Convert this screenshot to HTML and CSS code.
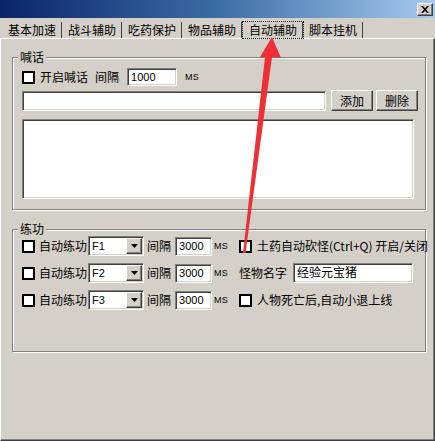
FILE: index.html
```html
<!DOCTYPE html>
<html>
<head>
<meta charset="utf-8">
<link rel="stylesheet" href="styles.css">
</head>
<body>
<div class="window">
  <div class="titlebar">
    <span class="close raised"><svg width="8" height="7" viewBox="0 0 8 7"><path d="M0 0h2l2 2.2L6 0h2L5 3.5 8 7H6L4 4.8 2 7H0l3-3.5z" fill="#000"/></svg></span>
  </div>
  <div class="tabs">
    <div class="tab">基本加速</div>
    <div class="tab">战斗辅助</div>
    <div class="tab">吃药保护</div>
    <div class="tab">物品辅助</div>
    <div class="tab active">自动辅助</div>
    <div class="tab">脚本挂机</div>
  </div>
  <div class="panel">
    <div class="group g1">
      <div class="group-title">喊话</div>
      <div class="row r1">
        <span class="cb"></span>
        <span class="lbl ml5">开启喊话</span>
        <span class="lbl ml7">间隔</span>
        <span class="field sunken w50 ml8">1000</span>
        <span class="ms ml8">MS</span>
      </div>
      <div class="row r2">
        <span class="field sunken w304"></span>
        <span class="btn raised ml5">添加</span>
        <span class="btn raised ml3">删除</span>
      </div>
      <div class="memo sunken"></div>
    </div>
    <div class="group g2">
      <div class="group-title">练功</div>
      <div class="grid">
        <div class="row">
          <span class="cb"></span>
          <span class="lbl ml4">自动练功</span>
          <span class="select sunken ml1"><span class="sel-text">F1</span><span class="drop raised"><svg width="7" height="4" viewBox="0 0 7 4"><path d="M0 0h7L3.5 4z" fill="#000"/></svg></span></span>
          <span class="lbl ml3">间隔</span>
          <span class="field sunken w37 ml4">3000</span>
          <span class="ms ml2">MS</span>
        </div>
        <div class="row">
          <span class="cb"></span>
          <span class="lbl ml5">土药自动砍怪(Ctrl+Q) 开启/关闭</span>
        </div>
        <div class="row">
          <span class="cb"></span>
          <span class="lbl ml4">自动练功</span>
          <span class="select sunken ml1"><span class="sel-text">F2</span><span class="drop raised"><svg width="7" height="4" viewBox="0 0 7 4"><path d="M0 0h7L3.5 4z" fill="#000"/></svg></span></span>
          <span class="lbl ml3">间隔</span>
          <span class="field sunken w37 ml4">3000</span>
          <span class="ms ml2">MS</span>
        </div>
        <div class="row">
          <span class="lbl">怪物名字</span>
          <span class="field sunken w120 ml6 cjk">经验元宝猪</span>
        </div>
        <div class="row">
          <span class="cb"></span>
          <span class="lbl ml4">自动练功</span>
          <span class="select sunken ml1"><span class="sel-text">F3</span><span class="drop raised"><svg width="7" height="4" viewBox="0 0 7 4"><path d="M0 0h7L3.5 4z" fill="#000"/></svg></span></span>
          <span class="lbl ml3">间隔</span>
          <span class="field sunken w37 ml4">3000</span>
          <span class="ms ml2">MS</span>
        </div>
        <div class="row">
          <span class="cb"></span>
          <span class="lbl ml5">人物死亡后,自动小退上线</span>
        </div>
      </div>
    </div>
  </div>
  <svg class="arrow" width="435" height="441" viewBox="0 0 435 441">
    <polygon points="272,37 281,58 272,57 245.5,253 243,253 265,57 260,57" fill="#ef2f36"/>
  </svg>
</div>
</body>
</html>
```

FILE: styles.css
```css
* { box-sizing: border-box; }
html, body { margin: 0; padding: 0; }
body {
  background: #d4d0c8;
  font-family: "Noto Sans CJK SC", "Noto Sans", sans-serif;
  font-size: 12px;
  color: #000;
}
.window {
  position: relative;
  width: 435px;
  height: 441px;
  background: #d4d0c8;
  overflow: hidden;
}
.titlebar {
  height: 18px;
  background: linear-gradient(to right, #0a246a 0%, #3a6ea5 50%, #a6caf0 100%);
  display: flex;
  justify-content: flex-end;
  padding: 3px 2px 0 0;
}
.close {
  width: 16px;
  height: 13px;
  background: #d4d0c8;
  display: flex;
  align-items: center;
  justify-content: center;
}
.raised {
  border: 1px solid;
  border-color: #fff #404040 #404040 #fff;
  box-shadow: inset -1px -1px 0 #808080;
  background: #d4d0c8;
}
.sunken {
  border: 1px solid;
  border-color: #808080 #fff #fff #808080;
  box-shadow: inset 1px 1px 0 #404040, inset -1px -1px 0 #d4d0c8;
  background: #fff;
}
.tabs {
  height: 20px;
  display: flex;
  padding: 4px 0 0 2px;
}
.tab {
  height: 16px;
  line-height: 15px;
  padding: 0 5px 0 6px;
  border-right: 1px solid #404040;
  white-space: nowrap;
}
.tab.active {
  outline: 1px dotted #000;
  outline-offset: 0px;
  margin-left: 1px;
}
.panel {
  height: 403px;
  border-top: 1px solid #fff;
  border-left: 1px solid #fff;
  border-right: 1px solid #404040;
  border-bottom: 1px solid #404040;
  box-shadow: inset -1px -1px 0 #808080;
  padding: 18px 0 0 11px;
}
.group {
  width: 414px;
  border: 1px solid #808080;
  box-shadow: 1px 1px 0 #fff, inset 1px 1px 0 #fff;
  padding-left: 9px;
}
.g1 { height: 153px; }
.g2 { height: 123px; margin-top: 19px; }
.group-title {
  width: fit-content;
  margin: -8px 0 0 -4px;
  padding: 0 2px;
  line-height: 14px;
  background: #d4d0c8;
}
.row {
  display: flex;
  align-items: center;
  white-space: nowrap;
}
.r1 { margin-top: 4px; height: 18px; }
.r2 { margin-top: 4px; height: 21px; }
.memo { margin-top: 8px; width: 392px; height: 80px; }
.grid {
  display: grid;
  grid-template-columns: 217px 1fr;
  grid-auto-rows: 20px;
  row-gap: 7px;
}
.cb {
  width: 13px;
  height: 13px;
  border: 2px solid #000;
  background: #fff;
  flex: none;
}
.lbl { line-height: 16px; }
.field {
  height: 18px;
  font-family: "Liberation Sans", sans-serif;
  font-size: 11px;
  line-height: 16px;
  padding-left: 3px;
  flex: none;
}
.r2 .field { height: 20px; }
.grid .field { height: 19px; }
.field.cjk {
  font-family: "Noto Sans CJK SC", sans-serif;
  font-size: 12px;
  height: 20px;
  padding-left: 3px;
}
.w37 { width: 37px; }
.w50 { width: 50px; }
.w120 { width: 120px; }
.w304 { width: 304px; }
.ms {
  font-family: "Liberation Sans", sans-serif;
  font-size: 9px;
  letter-spacing: 0.3px;
}
.btn {
  width: 42px;
  height: 21px;
  display: flex;
  align-items: center;
  justify-content: center;
  flex: none;
}
.select {
  width: 56px;
  height: 20px;
  display: flex;
  justify-content: space-between;
  align-items: stretch;
  padding: 1px 1px 1px 0;
  flex: none;
}
.sel-text {
  font-family: "Liberation Sans", sans-serif;
  font-size: 11px;
  line-height: 16px;
  padding-left: 3px;
}
.drop {
  width: 16px;
  display: flex;
  align-items: center;
  justify-content: center;
}
.ml1 { margin-left: 1px; }
.ml2 { margin-left: 2px; }
.ml3 { margin-left: 3px; }
.ml4 { margin-left: 4px; }
.ml5 { margin-left: 5px; }
.ml6 { margin-left: 6px; }
.ml7 { margin-left: 7px; }
.ml8 { margin-left: 8px; }
.arrow {
  position: absolute;
  left: 0;
  top: 0;
  pointer-events: none;
}
```
